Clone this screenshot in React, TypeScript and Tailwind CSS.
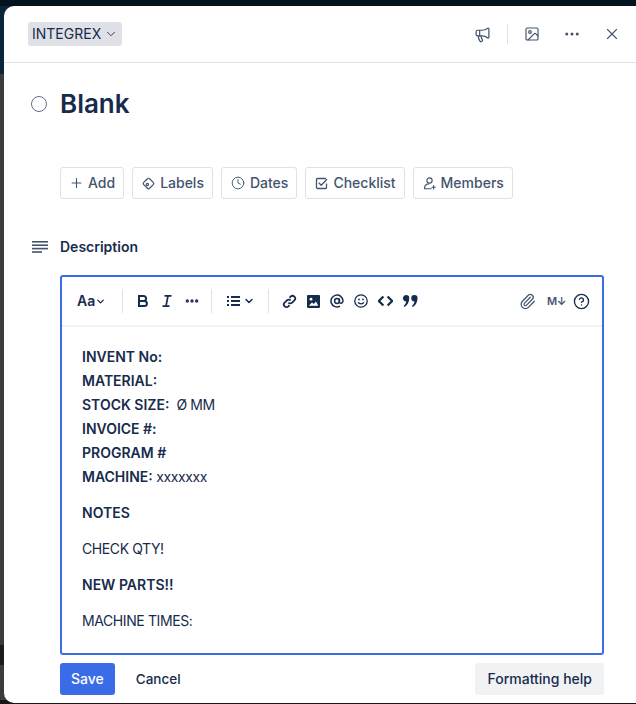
import React from 'react';
import { ChevronDown, CircleHelp, Clock, Ellipsis, Image, Megaphone, Paperclip, Plus, X } from 'lucide-react';

const LabelIcon = () => (
  <svg width="15" height="15" viewBox="0 0 16 16" fill="none" stroke="currentColor" strokeWidth="1.3">
    <rect x="3.6" y="3.6" width="8.8" height="8.8" rx="1.6" transform="rotate(45 8 8)" />
    <circle cx="6.8" cy="9" r="1.2" />
  </svg>
);

const CheckIcon = () => (
  <svg width="13" height="13" viewBox="0 0 13 13" fill="none" stroke="currentColor" strokeWidth="1.3">
    <path d="M11.5 6.500v4a1 1 0 0 1-1 1h-8a1 1 0 0 1-1-1v-8a1 1 0 0 1 1-1h8.500" />
    <path d="m3.800 5.800 2.400 2.500 5.800-6" />
  </svg>
);

const MemberIcon = () => (
  <svg width="15" height="15" viewBox="0 0 16 16" fill="none" stroke="currentColor" strokeWidth="1.2" strokeLinecap="round">
    <circle cx="8" cy="4.800" r="2.800" />
    <path d="M9.800 13.600H2.600c0-2.900 1.800-5 4.600-5.200" />
    <path d="M12.400 10.200v3.600M10.600 12h3.600" />
  </svg>
);

const actions = [
  { label: 'Add', slot: 'w-[15px]', icon: <Plus size={16} strokeWidth={1.75} /> },
  { label: 'Labels', slot: 'w-[15px]', icon: <LabelIcon /> },
  { label: 'Dates', slot: 'w-4', icon: <Clock size={14} strokeWidth={1.6} /> },
  { label: 'Checklist', slot: 'w-[15px]', icon: <CheckIcon /> },
  { label: 'Members', slot: 'w-[15px]', icon: <MemberIcon /> },
];

function Divider() {
  return <div className="h-6 w-px bg-[#dfe1e6]" />;
}

export default function App() {
  return (
    <div className="h-[704px] w-[636px] overflow-hidden bg-[linear-gradient(to_bottom,#04141f_6px,#0a2438_6px,#0a2438_74px,#3b3b3b_74px,#3b3b3b_645px,#1c1c1c_645px,#1c1c1c_665px,#3b3b3b_665px,#3b3b3b_700px,#14181c_700px)] pl-1 pt-1.5 font-['Inter',sans-serif] text-[#172b4d]">
      <div className="flex h-[697px] flex-col rounded-l-[10px] bg-white">
        <header className="flex h-[57px] shrink-0 items-center justify-between border-b border-[#dfe1e6] pl-6 pr-[15px]">
          <button className="flex h-6 items-center gap-[3px] rounded-[3px] bg-[#dfe1e6] px-1 text-sm text-[#172b4d]">
            INTEGREX
            <ChevronDown size={14} strokeWidth={1.5} />
          </button>
          <div className="flex items-center text-[#44546f]">
            <Megaphone size={17} strokeWidth={1.75} />
            <div className="mx-4 h-5 w-px bg-[#dfe1e6]" />
            <Image size={16} strokeWidth={1.75} />
            <Ellipsis size={18} className="ml-[23px]" />
            <X size={18} strokeWidth={1.5} className="ml-[22px]" />
          </div>
        </header>

        <div className="flex items-center gap-[13px] pl-[27px] pt-[25px]">
          <div className="h-4 w-4 rounded-full border-[1.5px] border-[#626f86]" />
          <h1 className="text-[26px] leading-8 font-semibold">Blank</h1>
        </div>

        <div className="mt-[47px] flex gap-2 pl-14">
          {actions.map(a => (
            <button
              key={a.label}
              className="flex h-8 items-center gap-1 rounded-[3px] border border-[#dfe1e6] px-2 text-sm font-medium text-[#44546f]"
            >
              <span className={`flex ${a.slot} justify-center`}>{a.icon}</span>
              {a.label}
            </button>
          ))}
        </div>

        <div className="mt-[38px] flex items-center gap-[12px] pl-7">
          <svg width="16" height="14" viewBox="0 0 16 14" fill="#44546f">
            <rect y="1" width="16" height="1.6" />
            <rect y="4.4" width="16" height="1.6" />
            <rect y="7.8" width="16" height="1.6" />
            <rect y="11.2" width="10" height="1.6" />
          </svg>
          <h2 className="text-sm font-semibold">Description</h2>
        </div>

        <div className="ml-14 mr-8 mt-[18px] h-[380px] rounded-[3px] border-2 border-[#3b6ce8]">
          <div className="flex h-[50px] items-center border-b-2 border-[#f1f2f4] pl-[15px] pr-3">
            <span className="flex w-[32px] items-center text-sm font-semibold">
              Aa
              <ChevronDown size={11} strokeWidth={3} />
            </span>
            <div className="ml-[13px] mr-[14px]"><Divider /></div>
            <svg width="12" height="14" viewBox="0 0 12 14" fill="none" stroke="currentColor" strokeWidth="2">
              <path d="M2 2h4.6a2.4 2.4 0 0 1 0 5H2zM2 7h5.400a2.500 2.500 0 0 1 0 5H2z" />
            </svg>
            <svg width="12" height="14" viewBox="0 0 12 14" fill="none" stroke="currentColor" strokeWidth="1.7" className="ml-[12px]">
              <path d="M3.500 1.800h7M1.500 12.200h7M7 1.800 5 12.200" />
            </svg>
            <Ellipsis size={16} strokeWidth={3} className="ml-[11px]" />
            <div className="ml-[11px] mr-[15px]"><Divider /></div>
            <svg width="13" height="12" viewBox="0 0 13 12" fill="currentColor">
              <rect y="1" width="2" height="2" />
              <rect y="5" width="2" height="2" />
              <rect y="9" width="2" height="2" />
              <rect x="4" y="1" width="9" height="2" />
              <rect x="4" y="5" width="9" height="2" />
              <rect x="4" y="9" width="9" height="2" />
            </svg>
            <ChevronDown size={12} strokeWidth={3} className="ml-[3px]" />
            <div className="ml-[13px] mr-[13px]"><Divider /></div>
            <div className="flex items-center gap-[10px]">
              <svg width="15" height="15" viewBox="0 0 16 16" fill="none" stroke="currentColor" strokeWidth="1.9">
                <path d="M6.800 9.200a2.800 2.800 0 0 0 4 0l2.400-2.400a2.800 2.800 0 0 0-4-4L8 4" />
                <path d="M9.200 6.800a2.800 2.800 0 0 0-4 0L2.800 9.200a2.800 2.800 0 0 0 4 4L8 12" />
              </svg>
              <svg width="13" height="13" viewBox="0 0 13 13">
                <rect width="13" height="13" rx="1" fill="currentColor" />
                <circle cx="4" cy="4.200" r="1.400" fill="#fff" />
                <path d="M1.800 10.800 5 7.400l1.800 1.600 2.200-2.600 2.200 4.400z" fill="#fff" />
              </svg>
              <svg width="14" height="14" viewBox="0 0 14 14" fill="none" stroke="currentColor" strokeWidth="1.5">
                <circle cx="7" cy="7" r="2.400" />
                <path d="M9.400 4.600v3.200c0 2.200 3.600 2 3.600-1A6 6 0 1 0 10 12.200" />
              </svg>
              <svg width="14" height="14" viewBox="0 0 14 14" fill="none" stroke="currentColor" strokeWidth="1.300">
                <circle cx="7" cy="7" r="6.200" />
                <path d="M4 8.400c1.400 1.900 4.600 1.900 6 0" />
                <circle cx="5" cy="5.400" r=".9" fill="currentColor" stroke="none" />
                <circle cx="9" cy="5.400" r=".9" fill="currentColor" stroke="none" />
              </svg>
              <svg width="15" height="12" viewBox="0 0 15 12" fill="none" stroke="currentColor" strokeWidth="2.200">
                <path d="M5.400 1.400.9 6l4.500 4.600M9.600 1.400 14.100 6l-4.500 4.600" />
              </svg>
              <svg width="15" height="12" viewBox="0 0 15 12" fill="currentColor">
                <path d="M3.200 0a3 3 0 0 1 3 3.200C6.200 7 4.500 10.300 1.400 12L.6 10.900C2 9.800 2.900 8.400 3.100 6.400A3.200 3.200 0 1 1 3.200 0z" />
                <path d="M11.500 0a3 3 0 0 1 3 3.200c0 3.800-1.700 7.100-4.800 8.800l-.8-1.100c1.400-1.100 2.300-2.500 2.500-4.500A3.200 3.200 0 1 1 11.500 0z" />
              </svg>
            </div>
            <div className="ml-auto flex items-center gap-[11px]">
              <Paperclip size={17} strokeWidth={1.75} className="text-[#44546f]" />
              <span className="w-[17px] whitespace-nowrap text-[11px] font-semibold tracking-[-0.5px] text-[#44546f]">M↓</span>
              <CircleHelp size={17} strokeWidth={1.9} className="-ml-[2px]" />
            </div>
          </div>
          <div className="px-5 pt-[18px] text-sm leading-6 tracking-[-0.4px]">
            <p><strong className="font-semibold tracking-normal">INVENT No:</strong></p>
            <p><strong className="font-semibold tracking-normal">MATERIAL:</strong></p>
            <p><strong className="font-semibold tracking-normal">STOCK SIZE:</strong>&nbsp; Ø MM</p>
            <p><strong className="font-semibold tracking-normal">INVOICE #:</strong></p>
            <p><strong className="font-semibold tracking-normal">PROGRAM #</strong></p>
            <p><strong className="font-semibold tracking-normal">MACHINE:</strong> xxxxxxx</p>
            <p className="mt-3"><strong className="font-semibold tracking-normal">NOTES</strong></p>
            <p className="mt-3">CHECK QTY!</p>
            <p className="mt-3"><strong className="font-semibold tracking-normal">NEW PARTS!!</strong></p>
            <p className="mt-3">MACHINE TIMES:</p>
          </div>
        </div>

        <div className="ml-14 mr-8 mt-2 flex items-center justify-between">
          <div className="flex items-center gap-[21px]">
            <button className="h-8 rounded-[3px] bg-[#3b6ce8] px-[11px] text-sm font-medium text-white">Save</button>
            <button className="text-[13.5px] font-medium">Cancel</button>
          </div>
          <button className="h-8 rounded-[3px] bg-[#f1f2f4] px-3 text-sm font-medium">Formatting help</button>
        </div>
      </div>
    </div>
  );
}
